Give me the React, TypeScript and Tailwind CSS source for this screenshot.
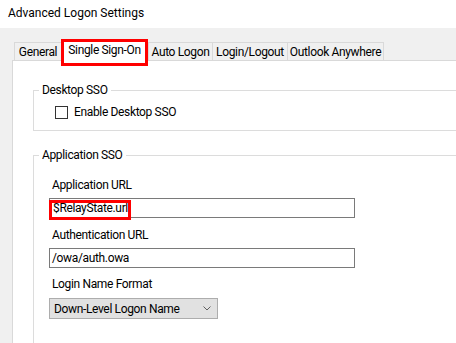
import React from 'react';

const tabs = [
  { label: 'General', w: 'w-[47px]' },
  { label: 'Single Sign-On', w: 'w-[87px]', active: true },
  { label: 'Auto Logon', w: 'w-[64px]' },
  { label: 'Login/Logout', w: 'w-[75px]' },
  { label: 'Outlook Anywhere', w: 'w-[97px]' },
];

export default function App() {
  return (
    <div className="relative h-[343px] w-[456px] overflow-hidden whitespace-nowrap bg-[#f0f0f0] font-['Roboto',sans-serif] text-[12px] leading-[16px] tracking-[-0.35px] text-black">
      {/* title bar */}
      <div className="flex h-[28px] items-center bg-white pb-[2px] pl-[8px] tracking-normal">Advanced Logon Settings</div>

      <div className="pl-[12px] pt-[12px]">
        {/* tab strip */}
        <div className="relative z-10 flex h-[20px] items-end pl-[2px]">
          {tabs.map((t, i) =>
            t.active ? (
              <div
                key={t.label}
                className={`${t.w} -mb-px flex h-[21px] items-start justify-center border-x border-t border-[#d9d9d9] bg-white pt-[1px]`}
              >
                {t.label}
              </div>
            ) : (
              <div
                key={t.label}
                className={`${t.w} flex h-[18px] items-center justify-center border-t border-l border-[#d9d9d9] bg-[#f0f0f0] ${
                  i === tabs.length - 1 ? 'border-r' : ''
                }`}
              >
                {t.label}
              </div>
            ),
          )}
        </div>

        {/* tab panel */}
        <div className="h-[300px] border-t border-l border-[#d9d9d9] bg-white pl-[20px] pt-[21px]">
          <fieldset className="border border-r-0 border-[#dcdcdc] pb-[10px]">
            <legend className="ml-[5px] px-[3px]">Desktop SSO</legend>
            <label className="mt-[6px] flex items-center gap-[6px] pl-[21px]">
              <span className="h-[13px] w-[13px] border border-[#333333] bg-white" />
              Enable Desktop SSO
            </label>
          </fieldset>

          <fieldset className="mt-[16px] h-[200px] border border-r-0 border-[#dcdcdc]">
            <legend className="ml-[5px] px-[3px]">Application SSO</legend>
            <div className="pl-[15px]">
              <div className="mt-[14px] pl-[3px]">Application URL</div>
              <div className="mt-[5px] flex h-[20px] w-[306px] items-center border border-[#7a7a7a] pl-[3px]">$RelayState.url</div>
              <div className="mt-[9px] pl-[3px]">Authentication URL</div>
              <div className="mt-[5px] flex h-[20px] w-[306px] items-center border border-[#7a7a7a] pl-[2px]">/owa/auth.owa</div>
              <div className="mt-[8px] pl-[3px]">Login Name Format</div>
              <div className="mt-[6px] flex h-[21px] w-[169px] items-center justify-between border border-[#adadad] bg-[#e1e1e1] pl-[4px] pr-[6px]">
                <span>Down-Level Logon Name</span>
                <svg width="8" height="5" viewBox="0 0 8 5" fill="none">
                  <path d="M0.5 0.5 L4 4 L7.5 0.5" stroke="#606060" strokeWidth="1" />
                </svg>
              </div>
            </div>
          </fieldset>
        </div>
      </div>

      {/* annotation boxes */}
      <div className="absolute left-[61px] top-[39px] z-20 h-[27px] w-[87px] border-[3px] border-[#ff0000]" />
      <div className="absolute left-[49px] top-[200px] z-20 h-[20px] w-[82px] border-[3px] border-[#ff0000]" />
    </div>
  );
}
